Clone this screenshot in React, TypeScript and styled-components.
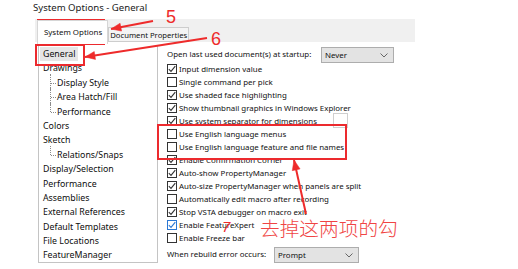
import React from "react";
import styled, { createGlobalStyle } from "styled-components";

const GlobalStyle = createGlobalStyle`
  html, body {
    margin: 0;
    padding: 0;
    background: #fff;
  }
`;

type TreeItem = {
  label: string;
  child?: boolean;
  last?: boolean;
  selected?: boolean;
};

const treeItems: TreeItem[] = [
  { label: "General", selected: true },
  { label: "Drawings" },
  { label: "Display Style", child: true },
  { label: "Area Hatch/Fill", child: true },
  { label: "Performance", child: true, last: true },
  { label: "Colors" },
  { label: "Sketch" },
  { label: "Relations/Snaps", child: true, last: true },
  { label: "Display/Selection" },
  { label: "Performance" },
  { label: "Assemblies" },
  { label: "External References" },
  { label: "Default Templates" },
  { label: "File Locations" },
  { label: "FeatureManager" },
];

type Option = {
  label: string;
  checked?: boolean;
  accent?: boolean;
  withBox?: boolean;
};

const options: Option[] = [
  { label: "Input dimension value", checked: true },
  { label: "Single command per pick" },
  { label: "Use shaded face highlighting", checked: true },
  { label: "Show thumbnail graphics in Windows Explorer", checked: true },
  { label: "Use system separator for dimensions", checked: true, withBox: true },
  { label: "Use English language menus" },
  { label: "Use English language feature and file names" },
  { label: "Enable Confirmation Corner", checked: true },
  { label: "Auto-show PropertyManager", checked: true },
  { label: "Auto-size PropertyManager when panels are split", checked: true },
  { label: "Automatically edit macro after recording" },
  { label: "Stop VSTA debugger on macro exit", checked: true },
  { label: "Enable FeatureXpert", checked: true, accent: true },
  { label: "Enable Freeze bar" },
];

const arrows = [
  { x1: 153, y1: 21, x2: 111, y2: 29 },
  { x1: 207, y1: 38, x2: 85, y2: 57 },
  { x1: 306, y1: 214, x2: 294, y2: 160 },
];

const arrowHead = (x1: number, y1: number, x2: number, y2: number) => {
  const len = 10;
  const half = 4;
  const dx = x2 - x1;
  const dy = y2 - y1;
  const d = Math.hypot(dx, dy);
  const ux = dx / d;
  const uy = dy / d;
  const bx = x2 - ux * len;
  const by = y2 - uy * len;
  return `${x2},${y2} ${bx - uy * half},${by + ux * half} ${bx + uy * half},${by - ux * half}`;
};

export default function App() {
  return (
    <>
      <GlobalStyle />
      <Window>
        <TitleBar>System Options - General</TitleBar>
        <TabStrip>
          <Tab $active>System Options</Tab>
          <Tab>Document Properties</Tab>
        </TabStrip>
        <Body>
          <Tree>
            {treeItems.map((item, i) =>
              item.child ? (
                <TreeChild key={i} $last={item.last}>
                  {item.label}
                </TreeChild>
              ) : (
                <TreeNode key={i}>
                  <NodeLabel $selected={item.selected}>{item.label}</NodeLabel>
                </TreeNode>
              )
            )}
          </Tree>
          <Panel>
            <FieldRow>
              <FieldLabel $width={154}>Open last used document(s) at startup:</FieldLabel>
              <Select $width={73}>
                Never
                <Chevron />
              </Select>
            </FieldRow>
            {options.map((opt) => (
              <CheckRow key={opt.label} $wide={opt.withBox}>
                <Box $accent={opt.accent}>
                  {opt.checked && (
                    <svg width="8" height="8" viewBox="0 0 8 8">
                      <polyline
                        points="0.8,4.2 3,6.4 7.3,1.2"
                        fill="none"
                        stroke={opt.accent ? "#2b78d4" : "#333"}
                        strokeWidth="1.1"
                      />
                    </svg>
                  )}
                </Box>
                <span>{opt.label}</span>
                {opt.withBox && <SmallInput />}
              </CheckRow>
            ))}
            <FieldRow $gap={3}>
              <FieldLabel $width={107}>When rebuild error occurs:</FieldLabel>
              <Select $width={85}>
                Prompt
                <Chevron />
              </Select>
            </FieldRow>
          </Panel>
        </Body>

        <RedFrame $x={37} $y={19} $w={68} $h={26} />
        <RedFrame $x={35} $y={44} $w={50} $h={22} />
        <RedFrame $x={157} $y={124} $w={190} $h={36} />
        <Overlay width="518" height="269" viewBox="0 0 518 269">
          {arrows.map((a, i) => (
            <g key={i} fill="#ee2b2b" stroke="#ee2b2b">
              <line x1={a.x1} y1={a.y1} x2={a.x2} y2={a.y2} strokeWidth="2" />
              <polygon points={arrowHead(a.x1, a.y1, a.x2, a.y2)} strokeWidth="0.5" />
            </g>
          ))}
        </Overlay>
        <Digit $x={166} $y={7.6}>5</Digit>
        <Digit $x={211} $y={29.6}>6</Digit>
        <Digit $x={222} $y={218} $small>7</Digit>
        <Note>去掉这两项的勾</Note>
      </Window>
    </>
  );
}

const Chevron = () => (
  <svg width="8" height="5" viewBox="0 0 8 5">
    <polyline points="0.5,0.5 4,4 7.5,0.5" fill="none" stroke="#666" strokeWidth="1" />
  </svg>
);

const Window = styled.div`
  position: relative;
  width: 518px;
  height: 269px;
  overflow: hidden;
  background: #fff;
  font-family: "Noto Sans", "Noto Sans CJK SC", sans-serif;
  font-size: 7.9px;
  color: #111;
`;

const TitleBar = styled.div`
  height: 19px;
  padding-left: 33px;
  font-size: 9.6px;
  line-height: 15px;
  color: #1a1a1a;
`;

const TabStrip = styled.div`
  display: flex;
  align-items: flex-end;
  box-sizing: border-box;
  margin-left: 35px;
  width: 380px;
  height: 23px;
  padding-left: 2px;
  background: #f0f0f0;
`;

const Tab = styled.div<{ $active?: boolean }>`
  display: flex;
  align-items: center;
  box-sizing: border-box;
  position: relative;
  z-index: ${(p) => (p.$active ? 1 : 0)};
  height: ${(p) => (p.$active ? "24px" : "15px")};
  margin-bottom: ${(p) => (p.$active ? "-2px" : "0")};
  padding: ${(p) => (p.$active ? "0 5px 2px 6px" : "0 1px 0 1px")};
  font-size: ${(p) => (p.$active ? "inherit" : "7.7px")};
  background: ${(p) => (p.$active ? "#fff" : "#f4f4f4")};
  border: 1px solid ${(p) => (p.$active ? "#d6d6d6" : "#cdcdcd")};
  border-bottom: ${(p) => (p.$active ? "none" : "1px solid #cdcdcd")};
  white-space: nowrap;
`;

const Body = styled.div`
  display: flex;
  align-items: flex-start;
  padding-top: 3px;
`;

const Tree = styled.div`
  box-sizing: border-box;
  flex: none;
  margin-left: 38px;
  width: 120px;
  height: 218px;
  padding-top: 2px;
  border: 1px solid #c4c4c4;
  border-top: none;
  font-size: 8.8px;
  color: #0d0d0d;
`;

const TreeNode = styled.div`
  height: 14.4px;
  line-height: 14.4px;
  padding-left: 1px;
  white-space: nowrap;
`;

const NodeLabel = styled.span<{ $selected?: boolean }>`
  display: inline-block;
  padding: 0 3px;
  background: ${(p) => (p.$selected ? "#e6e6e6" : "transparent")};
`;

const TreeChild = styled.div<{ $last?: boolean }>`
  position: relative;
  height: 14.4px;
  line-height: 14.4px;
  padding-left: 18px;
  white-space: nowrap;

  &::before {
    content: "";
    position: absolute;
    left: 11px;
    top: -2px;
    height: ${(p) => (p.$last ? "9px" : "16.4px")};
    border-left: 1px dotted #8a8a8a;
  }

  &::after {
    content: "";
    position: absolute;
    left: 12px;
    top: 7px;
    width: 5px;
    border-top: 1px dotted #8a8a8a;
  }
`;

const Panel = styled.div`
  display: flex;
  flex-direction: column;
  flex: 1;
  padding: 2px 0 0 9px;
`;

const FieldRow = styled.div<{ $gap?: number }>`
  display: flex;
  align-items: flex-start;
  height: 15px;
  margin-top: ${(p) => p.$gap ?? 0}px;
  white-space: nowrap;
`;

const FieldLabel = styled.span<{ $width: number }>`
  flex: none;
  width: ${(p) => p.$width}px;
  line-height: 15px;
`;

const Select = styled.div<{ $width: number }>`
  display: flex;
  align-items: center;
  justify-content: space-between;
  box-sizing: border-box;
  width: ${(p) => p.$width}px;
  height: 16px;
  padding: 0 5px 0 3px;
  background: #e3e3e3;
  border: 1px solid #adadad;
`;

const CheckRow = styled.div<{ $wide?: boolean }>`
  display: flex;
  align-items: center;
  gap: 2px;
  height: 13px;
  width: ${(p) => (p.$wide ? "181px" : "auto")};
  white-space: nowrap;
`;

const Box = styled.span<{ $accent?: boolean }>`
  display: flex;
  align-items: center;
  justify-content: center;
  box-sizing: border-box;
  flex: none;
  width: 10px;
  height: 10px;
  background: #fff;
  border: 1px solid ${(p) => (p.$accent ? "#2b78d4" : "#333")};
`;

const SmallInput = styled.span`
  flex: none;
  box-sizing: border-box;
  width: 15px;
  height: 15px;
  margin-left: auto;
  background: #fff;
  border: 1px solid #cfcfcf;
`;

const RedFrame = styled.div<{ $x: number; $y: number; $w: number; $h: number }>`
  position: absolute;
  left: ${(p) => p.$x}px;
  top: ${(p) => p.$y}px;
  width: ${(p) => p.$w}px;
  height: ${(p) => p.$h}px;
  box-sizing: border-box;
  border: 2px solid #ec2a2e;
  pointer-events: none;
`;

const Overlay = styled.svg`
  position: absolute;
  left: 0;
  top: 0;
  pointer-events: none;
`;

const Digit = styled.div<{ $x: number; $y: number; $small?: boolean }>`
  position: absolute;
  left: ${(p) => p.$x}px;
  top: ${(p) => p.$y}px;
  font-family: "Liberation Sans", Arial, sans-serif;
  font-size: ${(p) => (p.$small ? "15px" : "18px")};
  font-style: ${(p) => (p.$small ? "italic" : "normal")};
  line-height: 18px;
  color: #ee2b2b;
`;

const Note = styled.div`
  position: absolute;
  left: 260px;
  top: 217px;
  font-family: "Noto Sans CJK SC", sans-serif;
  font-size: 19.7px;
  font-weight: 300;
  line-height: 22px;
  color: #f04444;
  white-space: nowrap;
`;
